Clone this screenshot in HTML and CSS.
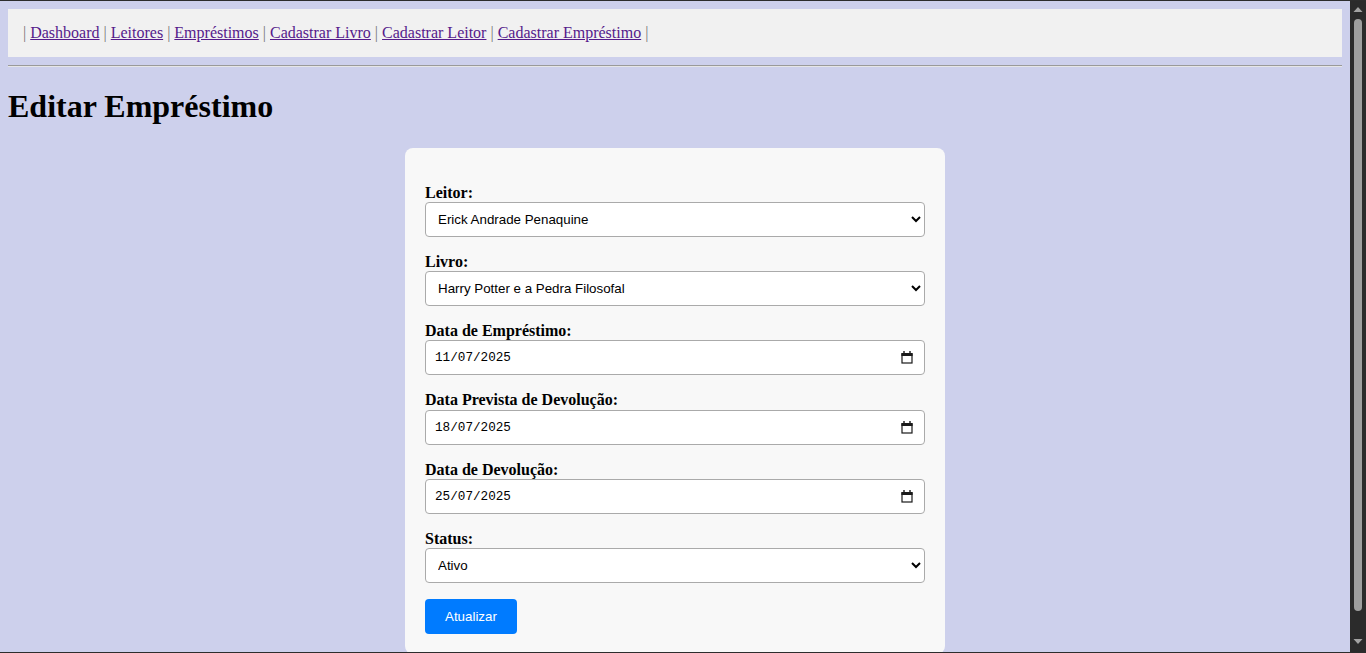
FILE: index.html
```html
<!DOCTYPE html>
<html lang="pt-BR">
<head>
<meta charset="utf-8">
<title>Editar Empréstimo</title>
<link rel="stylesheet" href="styles.css">
</head>
<body>
<div class="viewport">
  <div class="page">
    <nav class="topnav">
      | <a href="#" class="nav-link">Dashboard</a>
      | <a href="#" class="nav-link">Leitores</a>
      | <a href="#" class="nav-link">Empréstimos</a>
      | <a href="#" class="nav-link">Cadastrar Livro</a>
      | <a href="#" class="nav-link">Cadastrar Leitor</a>
      | <a href="#" class="nav-link">Cadastrar Empréstimo</a> |
    </nav>
    <hr class="divider">
    <h1 class="page-title">Editar Empréstimo</h1>
    <div class="card">
      <form class="loan-form">
        <label class="field-label" for="leitor">Leitor:</label>
        <select id="leitor" class="field-control">
          <option>Erick Andrade Penaquine</option>
        </select>

        <label class="field-label" for="livro">Livro:</label>
        <select id="livro" class="field-control">
          <option>Harry Potter e a Pedra Filosofal</option>
        </select>

        <label class="field-label" for="data-emprestimo">Data de Empréstimo:</label>
        <div class="field-control date-field">
          <input id="data-emprestimo" class="date-input" type="text" value="11/07/2025">
          <svg class="cal-icon" width="12" height="13" viewBox="0 0 12 13" aria-hidden="true"><path d="M3 0v2M9 0v2" stroke="#1a1a1a" stroke-width="1.4"/><rect x="1" y="3" width="10" height="9" fill="none" stroke="#1a1a1a" stroke-width="1.2"/><rect x="0.4" y="2" width="11.2" height="3" fill="#1a1a1a"/></svg>
        </div>

        <label class="field-label" for="data-prevista">Data Prevista de Devolução:</label>
        <div class="field-control date-field">
          <input id="data-prevista" class="date-input" type="text" value="18/07/2025">
          <svg class="cal-icon" width="12" height="13" viewBox="0 0 12 13" aria-hidden="true"><path d="M3 0v2M9 0v2" stroke="#1a1a1a" stroke-width="1.4"/><rect x="1" y="3" width="10" height="9" fill="none" stroke="#1a1a1a" stroke-width="1.2"/><rect x="0.4" y="2" width="11.2" height="3" fill="#1a1a1a"/></svg>
        </div>

        <label class="field-label" for="data-devolucao">Data de Devolução:</label>
        <div class="field-control date-field">
          <input id="data-devolucao" class="date-input" type="text" value="25/07/2025">
          <svg class="cal-icon" width="12" height="13" viewBox="0 0 12 13" aria-hidden="true"><path d="M3 0v2M9 0v2" stroke="#1a1a1a" stroke-width="1.4"/><rect x="1" y="3" width="10" height="9" fill="none" stroke="#1a1a1a" stroke-width="1.2"/><rect x="0.4" y="2" width="11.2" height="3" fill="#1a1a1a"/></svg>
        </div>

        <label class="field-label" for="status">Status:</label>
        <select id="status" class="field-control">
          <option>Ativo</option>
        </select>

        <button type="submit" class="btn-submit">Atualizar</button>
      </form>
    </div>
  </div>
  <div class="scrollbar" aria-hidden="true">
    <svg class="sb-arrow" width="16" height="17" viewBox="0 0 16 17"><polygon points="3.5,11 8,6 12.5,11" fill="#a3a3a3"/></svg>
    <div class="sb-thumb"></div>
    <div class="sb-track-rest"></div>
    <svg class="sb-arrow" width="16" height="17" viewBox="0 0 16 17"><polygon points="3.5,4 12.5,4 8,9" fill="#a3a3a3"/></svg>
  </div>
</div>
</body>
</html>
```
FILE: styles.css
```css
html,
body {
  margin: 0;
  padding: 0;
  height: 100%;
}

body {
  background: #cdd0ec;
  font-family: "Liberation Serif", "Times New Roman", serif;
  font-size: 16px;
  color: #000;
}

.viewport {
  display: flex;
  height: 100vh;
  box-sizing: border-box;
  border-top: 1px solid #2d2d2d;
  border-bottom: 1px solid #2d2d2d;
}

.page {
  flex: 1;
  min-width: 0;
  overflow-y: auto;
  padding: 8px;
}

.topnav {
  background: #f1f1f1;
  padding: 15px;
  color: #777;
}

.nav-link {
  color: #551a8b;
}

.divider {
  margin: 8px 0;
  height: 0;
  border: 0;
  border-top: 1px solid #9a9a9a;
  border-bottom: 1px solid #e6e6e6;
}

.page-title {
  font-size: 32px;
  font-weight: bold;
  margin: 21.44px 0 22.44px;
}

.card {
  width: 500px;
  margin: 0 auto 19px;
  padding: 20px;
  background: #f8f8f8;
  border-radius: 8px;
}

.field-label {
  display: block;
  margin-top: 15px;
  font-weight: bold;
  line-height: 19.2px;
}

.field-control {
  display: block;
  width: 100%;
  height: 35px;
  box-sizing: border-box;
  padding: 8px;
  border: 1px solid #aaa;
  border-radius: 4px;
  background: #fff;
  color: #000;
  font-family: "Liberation Sans", Arial, sans-serif;
  font-size: 13.33px;
}

.date-field {
  display: flex;
  align-items: center;
  padding: 0 11px 0 9px;
}

.date-input {
  flex: 1;
  min-width: 0;
  border: 0;
  padding: 0;
  margin: 0;
  outline: none;
  background: transparent;
  color: #000;
  font-family: "Liberation Mono", "DejaVu Sans Mono", monospace;
  font-size: 12.67px;
}

.cal-icon {
  flex: none;
  display: block;
}

.btn-submit {
  display: block;
  margin-top: 16px;
  padding: 10px 20px;
  border: 0;
  border-radius: 4px;
  background: #007bff;
  color: #fff;
  font-family: "Liberation Sans", Arial, sans-serif;
  font-size: 13.33px;
  line-height: 15px;
  cursor: pointer;
}

.scrollbar {
  flex: none;
  width: 16px;
  display: flex;
  flex-direction: column;
  background: #2b2b2b;
}

.sb-arrow {
  display: block;
  flex: none;
}

.sb-thumb {
  flex: none;
  height: 592px;
  margin: 1px 4px 0;
  background: #9f9f9f;
  border-radius: 4px;
}

.sb-track-rest {
  flex: 1;
}
```
